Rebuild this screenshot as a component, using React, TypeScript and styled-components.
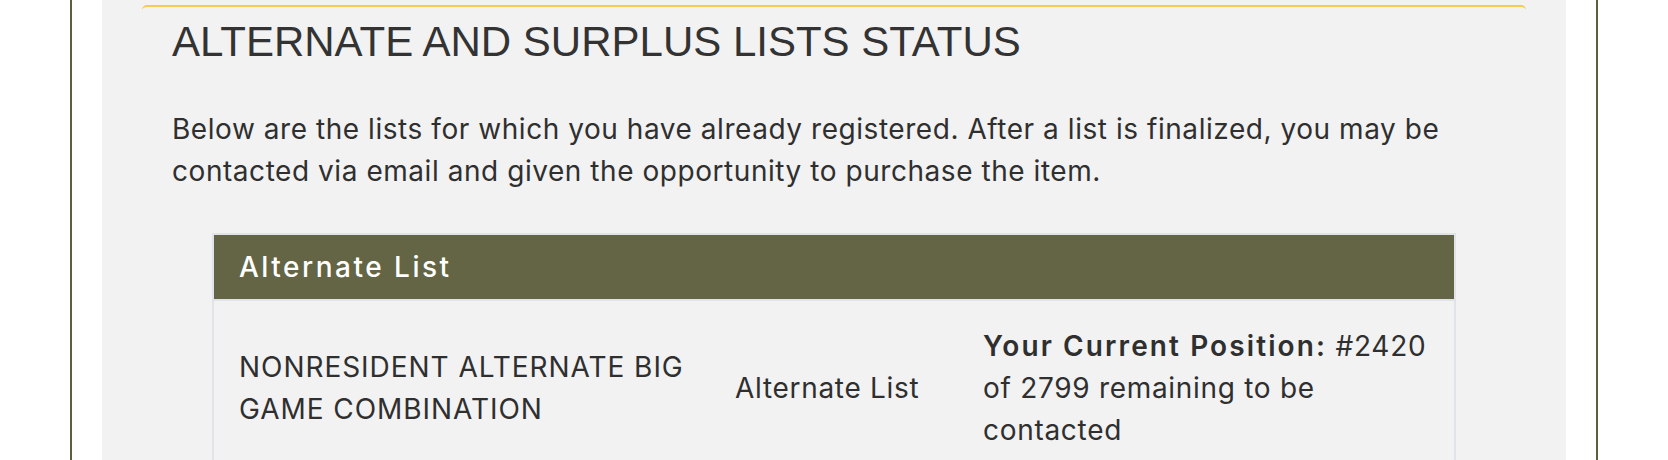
import { FC } from 'react'
import styled, { createGlobalStyle } from 'styled-components'

const GlobalStyle = createGlobalStyle`
  html, body {
    margin: 0;
    padding: 0;
    background: #fff;
  }
  body {
    font-family: Inter, 'Noto Sans', sans-serif;
    color: #2f2f2f;
  }
`

type ListEntry = {
  name: string
  type: string
  position: number
  total: number
}

const entries: ListEntry[] = [
  {
    name: 'NONRESIDENT ALTERNATE BIG GAME COMBINATION',
    type: 'Alternate List',
    position: 2420,
    total: 2799,
  },
]

const App: FC = () => {
  return (
    <>
      <GlobalStyle />
      <Page>
        <Panel>
          <Card>
            <Title>ALTERNATE AND SURPLUS LISTS STATUS</Title>
            <Intro>
              Below are the lists for which you have already registered. After a
              list is finalized, you may be contacted via email and given the
              opportunity to purchase the item.
            </Intro>

            <ListTable>
              <ListHeader>Alternate List</ListHeader>
              {entries.map((entry) => (
                <ListRow key={entry.name}>
                  <Cell $tracking={0.95}>{entry.name}</Cell>
                  <Cell>{entry.type}</Cell>
                  <Cell>
                    <Label>Your Current Position:</Label> #{entry.position} of{' '}
                    {entry.total} remaining to be contacted
                  </Cell>
                </ListRow>
              ))}
            </ListTable>
          </Card>
        </Panel>
      </Page>
    </>
  )
}

const Page = styled.div`
  box-sizing: border-box;
  width: 1528px;
  min-height: 460px;
  margin: 0 auto;
  padding: 0 30px;
  border-left: 2px solid #5c5e3f;
  border-right: 2px solid #5c5e3f;
`

const Panel = styled.div`
  min-height: 460px;
  padding: 5px 40px 0;
  background: #f2f2f2;
`

const Card = styled.section`
  padding: 0 30px 40px;
  border-top: 2px solid #f9c950;
  border-radius: 5px;
`

const Title = styled.h2`
  margin: 10px 0 0;
  font-family: 'Liberation Sans', Arial, sans-serif;
  font-size: 42px;
  font-weight: 400;
  line-height: 50px;
  color: #333;
`

const Intro = styled.p`
  margin: 41px 0 0;
  font-size: 28px;
  line-height: 42px;
  letter-spacing: 0.55px;
`

const ListTable = styled.div`
  margin: 41px 40px 0;
  border: 2px solid #e0e3e7;
`

const ListHeader = styled.div`
  display: flex;
  align-items: center;
  height: 64px;
  padding: 0 25px;
  background: #636544;
  border-bottom: 2px solid #e0e3e7;
  color: #fff;
  font-size: 28px;
  font-weight: 500;
  letter-spacing: 2.5px;
`

const ListRow = styled.div`
  display: grid;
  grid-template-columns: 2fr 1fr 2fr;
  align-items: center;
`

const Cell = styled.div<{ $tracking?: number }>`
  padding: 24px 25px;
  font-size: 28px;
  line-height: 42px;
  letter-spacing: ${({ $tracking = 0.7 }) => `${$tracking}px`};
`

const Label = styled.strong`
  font-weight: 600;
  letter-spacing: 2.1px;
`

export default App
